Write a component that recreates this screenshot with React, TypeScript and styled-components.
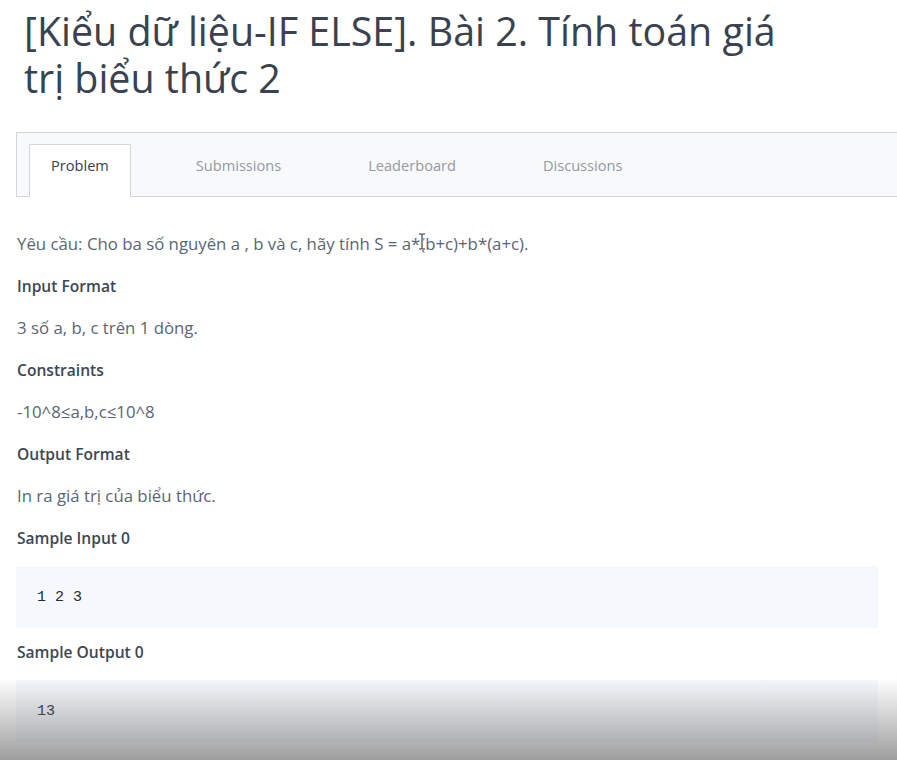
import React from 'react';
import styled, { createGlobalStyle } from 'styled-components';

const GlobalStyle = createGlobalStyle`
  html, body {
    margin: 0;
    padding: 0;
    background: #ffffff;
    overflow: hidden;
  }
  body {
    font-family: 'Open Sans', 'Noto Sans', sans-serif;
    width: 897px;
    height: 760px;
  }
`;

const tabs = ['Problem', 'Submissions', 'Leaderboard', 'Discussions'];

type Section = { title: string; body?: string; sample?: string };

const sections: Section[] = [
  { title: 'Input Format', body: '3 số a, b, c trên 1 dòng.' },
  { title: 'Constraints', body: '-10^8≤a,b,c≤10^8' },
  { title: 'Output Format', body: 'In ra giá trị của biểu thức.' },
  { title: 'Sample Input 0', sample: '1 2 3' },
  { title: 'Sample Output 0', sample: '13' },
];

const App: React.FC = () => {
  return (
    <Page>
      <GlobalStyle />
      <Title>[Kiểu dữ liệu-IF ELSE]. Bài 2. Tính toán giá trị biểu thức 2</Title>
      <TabBar>
        {tabs.map((t, i) => (
          <Tab key={t} active={i === 0}>
            {t}
          </Tab>
        ))}
      </TabBar>
      <Content>
        <Paragraph>
          Yêu cầu: Cho ba số nguyên a , b và c, hãy tính S = a*
          <CursorSpot>
            (
            <IBeam viewBox="0 0 8 17" aria-hidden>
              <path
                d="M1 1h2.5L4 1.6 4.5 1H7M4 1.6v13.8M1 16h2.5l.5-.6.5.6H7"
                fill="none"
                stroke="#ffffff"
                strokeWidth="2.4"
              />
              <path
                d="M1 1h2.5L4 1.6 4.5 1H7M4 1.6v13.8M1 16h2.5l.5-.6.5.6H7"
                fill="none"
                stroke="#1a1a1a"
                strokeWidth="1"
              />
            </IBeam>
          </CursorSpot>
          b+c)+b*(a+c).
        </Paragraph>
        {sections.map((s) => (
          <React.Fragment key={s.title}>
            <Heading>{s.title}</Heading>
            {s.body && <Paragraph>{s.body}</Paragraph>}
            {s.sample && (
              <SampleBox>
                <pre>{s.sample}</pre>
              </SampleBox>
            )}
          </React.Fragment>
        ))}
      </Content>
      <PlayerShade />
    </Page>
  );
};

const Page = styled.div`
  position: relative;
  height: 760px;
  padding: 0 19px 0 16px;
  box-sizing: border-box;
  overflow: hidden;
`;

const Title = styled.h1`
  margin: 0;
  max-width: 790px;
  padding: 8px 0 0 8px;
  font-size: 39.4px;
  line-height: 47px;
  font-weight: 400;
  color: #39424e;
`;

const TabBar = styled.div`
  display: flex;
  align-items: flex-end;
  gap: 43px;
  margin-top: 30px;
  margin-right: -60px;
  height: 63px;
  padding-left: 12px;
  border: 1px solid #d3d5d8;
  background: #f8f9fa;
`;

const Tab = styled.div<{ active?: boolean }>`
  height: 53px;
  margin-bottom: -1px;
  padding: 0 21px 12px;
  display: flex;
  align-items: center;
  justify-content: center;
  box-sizing: border-box;
  font-size: 14.6px;
  color: ${(p) => (p.active ? '#39424e' : '#939aa3')};
  background: ${(p) => (p.active ? '#ffffff' : 'transparent')};
  border: 1px solid ${(p) => (p.active ? '#d3d5d8' : 'transparent')};
  border-bottom: none;
`;

const Content = styled.div`
  padding-top: 36px;
  display: flex;
  flex-direction: column;
`;

const Paragraph = styled.p`
  margin: 0;
  height: 42px;
  padding-left: 1px;
  font-size: 16.8px;
  line-height: 22px;
  color: #5a6573;
`;

const CursorSpot = styled.span`
  position: relative;
`;

const IBeam = styled.svg`
  position: absolute;
  left: -2px;
  top: 1px;
  width: 8px;
  height: 17px;
`;

const Heading = styled.h3`
  margin: 0;
  height: 42px;
  padding-left: 1px;
  font-size: 15.6px;
  line-height: 22px;
  font-weight: 600;
  color: #3d4753;
`;

const SampleBox = styled.div`
  background: #f5f9fd;
  height: 62px;
  margin: -3px 0 13px;
  display: flex;
  align-items: center;
  padding-left: 21px;

  pre {
    margin: 0;
    font-family: 'Liberation Mono', 'DejaVu Sans Mono', monospace;
    font-size: 15px;
    color: #2b2b2b;
  }
`;

const PlayerShade = styled.div`
  position: absolute;
  left: 0;
  right: 0;
  bottom: 0;
  height: 82px;
  background: linear-gradient(
    to bottom,
    rgba(120, 120, 120, 0) 0%,
    rgba(120, 120, 120, 0.25) 35%,
    rgba(105, 105, 105, 0.65) 100%
  );
  pointer-events: none;
`;

export default App;
